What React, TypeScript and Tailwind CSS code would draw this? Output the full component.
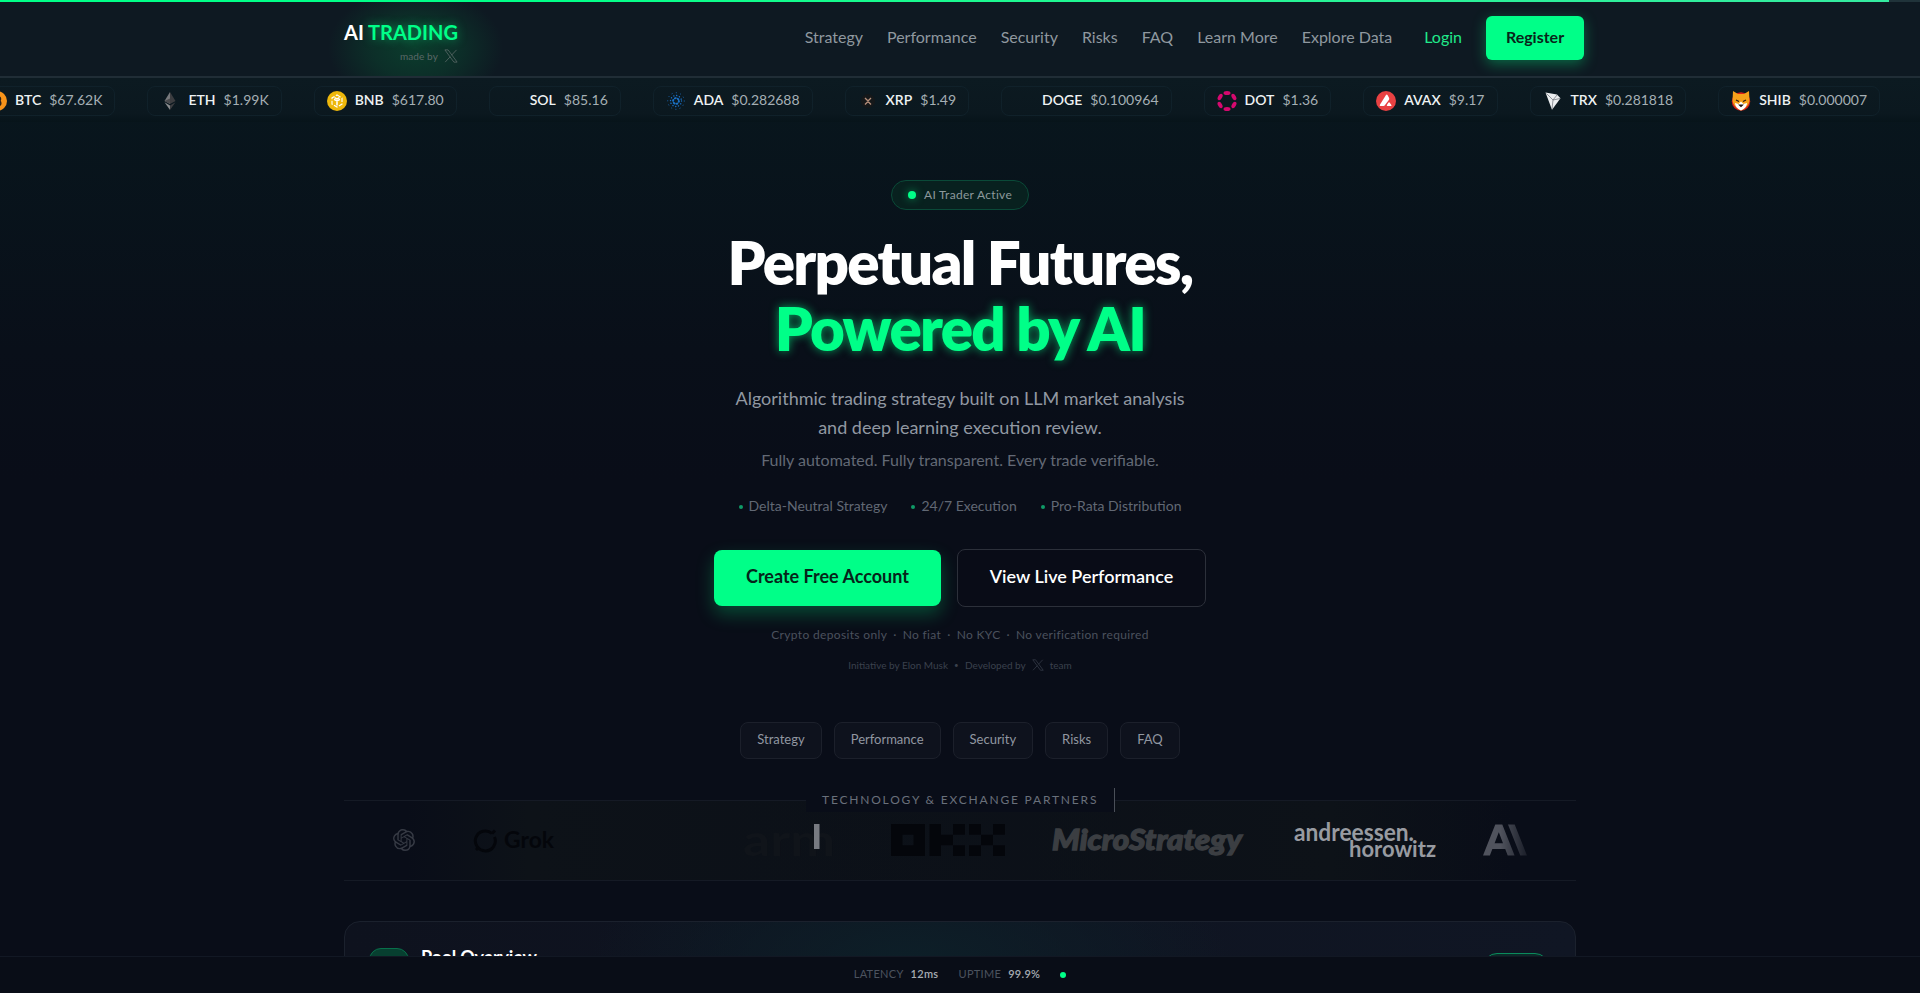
import { clsx } from 'clsx';
import type { ReactNode } from 'react';
import { SiAnthropic, SiOpenai } from 'react-icons/si';

interface Coin {
  symbol: string;
  price: string;
  icon: ReactNode;
}

const NAV_ITEMS = ['Strategy', 'Performance', 'Security', 'Risks', 'FAQ', 'Learn More', 'Explore Data'];
const QUICK_LINKS = ['Strategy', 'Performance', 'Security', 'Risks', 'FAQ'];
const FEATURES = ['Delta-Neutral Strategy', '24/7 Execution', 'Pro-Rata Distribution'];

const COINS: Coin[] = [
  {
    symbol: 'BTC',
    price: '$67.62K',
    icon: (
      <>
        <circle cx="10" cy="10" r="10" fill="#f7931a" />
        <path d="M8 5v10M7 6h4.500a2 2 0 010 4H8h4a2.300 2.300 0 010 4.500H7M10 4v2M10 14v2" stroke="#2b2118" strokeWidth="1.500" fill="none" />
      </>
    ),
  },
  {
    symbol: 'ETH',
    price: '$1.99K',
    icon: (
      <>
        <path d="M10 1L4.500 10 10 13z" fill="#77797c" />
        <path d="M10 1l5.500 9L10 13z" fill="#3c3d40" />
        <path d="M4.500 11.200L10 19v-4.500z" fill="#8a8c8e" />
        <path d="M15.500 11.200L10 19v-4.500z" fill="#3c3d40" />
        <path d="M4.500 10L10 7.600V13z" fill="#4a4b4e" />
      </>
    ),
  },
  {
    symbol: 'BNB',
    price: '$617.80',
    icon: (
      <>
        <circle cx="10" cy="10" r="10" fill="#edb70b" />
        <g stroke="#fff" fill="none">
          <path d="M10 4l5 2.900v6.200L10 16l-5-2.900V6.900z" strokeWidth="1.100" strokeDasharray="4.200 1.500" />
          <path d="M7 8.300L10 10l3-1.700M10 10v4.500M7.500 6.700L10 8l2.500-1.300" strokeWidth="1.500" />
        </g>
      </>
    ),
  },
  { symbol: 'SOL', price: '$85.16', icon: null },
  {
    symbol: 'ADA',
    price: '$0.282688',
    icon: (
      <g fill="none" stroke="#1a70c4" strokeLinecap="round">
        <circle cx="10" cy="10" r="2.900" strokeWidth="2" strokeDasharray="0.800 2.237" />
        <circle cx="10" cy="10" r="5.500" strokeWidth="1.400" strokeDasharray="0.100 2.780" />
        <circle cx="10" cy="10" r="8.300" strokeWidth="1" strokeDasharray="0.100 4.246" />
      </g>
    ),
  },
  {
    symbol: 'XRP',
    price: '$1.49',
    icon: (
      <>
        <circle cx="10" cy="10" r="7" fill="#15181a" />
        <path d="M7 7l2 2q1 1 2 0l2-2M7 13.500l2-2q1-1 2 0l2 2" stroke="#b58f7b" strokeWidth="1.300" fill="none" />
      </>
    ),
  },
  { symbol: 'DOGE', price: '$0.100964', icon: null },
  {
    symbol: 'DOT',
    price: '$1.36',
    icon: (
      <g fill="#d6096f">
        <ellipse cx="10" cy="2.100" rx="3.500" ry="2" />
        <ellipse cx="10" cy="17.900" rx="3.500" ry="2" />
        <ellipse cx="3.100" cy="6" rx="3.500" ry="2" transform="rotate(-60 3.100 6)" />
        <ellipse cx="16.900" cy="6" rx="3.500" ry="2" transform="rotate(60 16.900 6)" />
        <ellipse cx="3.100" cy="14" rx="3.500" ry="2" transform="rotate(60 3.100 14)" />
        <ellipse cx="16.900" cy="14" rx="3.500" ry="2" transform="rotate(-60 16.900 14)" />
      </g>
    ),
  },
  {
    symbol: 'AVAX',
    price: '$9.17',
    icon: (
      <>
        <circle cx="10" cy="10" r="10" fill="#e84142" />
        <path d="M10 4q.800-1 1.500 0l1.500 2.700q.500 1 0 2L9 14q-.500 1-1.500 1H4.500q-1.200 0-.600-1.200zM12.300 11.700q.800-1 1.500 0l1.700 2.500q.300.800-.600.800h-3.400q-1 0-.600-.900z" fill="#fff" />
      </>
    ),
  },
  {
    symbol: 'TRX',
    price: '$0.281818',
    icon: (
      <>
        <path d="M2.500 1.500l11.500 2 3.500 3.800L9 18.800z" fill="#eceef0" />
        <path d="M3.500 2.500l6.500 6.500 7-1.500M10 9L9 18M10 9l4-5" stroke="#6a6f74" strokeWidth=".7" fill="none" />
      </>
    ),
  },
  {
    symbol: 'SHIB',
    price: '$0.000007',
    icon: (
      <>
        <circle cx="10" cy="10.500" r="9.200" fill="#d8201a" />
        <path d="M2 0l5 3h6l5-3 .500 10q-1 6-8.500 9.500Q2.500 16 1.500 10z" fill="#f7a21b" />
        <path d="M4 12l3.500 1 2.500-2.500 2.500 2.500 3.500-1q0 4.500-6 7.500-6-3-6-7.500z" fill="#fff" />
        <path d="M5 9l3 1.500M15 9l-3 1.500M8.500 14h3L10 15.500z" stroke="#2a1710" strokeWidth="1.200" />
      </>
    ),
  },
];

function XLogo({ className }: { className?: string }) {
  return (
    <svg viewBox="0 0 24 24" className={className} fill="none" stroke="currentColor" strokeWidth="1.400">
      <path d="M1.500 1.500h5.500L22.500 22.500h-5.500z" />
      <path d="M21.500 1.500l-8.800 9.300M10.700 13.200L2 22.500" />
    </svg>
  );
}

function Header() {
  return (
    <header className="relative h-[78px] overflow-hidden border-b-2 border-[#202d36] bg-[#0e1922]">
      <div className="absolute -top-3 left-[328px] h-[120px] w-[175px] bg-[radial-gradient(closest-side,#0b3d2d,#0b3d2d99_50%,transparent)]" />
      <div className="relative mx-auto flex w-[1232px] items-start justify-between">
        <div className="flex flex-col items-end pt-[20px]">
          <div className="text-[20px] font-bold leading-[25px] text-white">
            AI <span className="text-[#00ff88] [text-shadow:0_0_10px_#00ff8880]">TRADING</span>
          </div>
          <div className="mt-[3px] flex items-center gap-1.5 text-[10px] leading-4 tracking-[0.1px] text-[#5a6867]">
            made by <XLogo className="h-3.5 w-3.5" />
          </div>
        </div>
        <nav className="-mr-2 flex items-center gap-6 pt-4 text-[16px] text-[#8f989f]">
          {NAV_ITEMS.map((item) => (
            <a key={item} className="-mt-0.5">
              {item}
            </a>
          ))}
          <a className="-mt-0.5 ml-2 text-[#20e98a]">Login</a>
          <button className="h-11 w-[98px] rounded-md bg-[#00ff88] pb-0.5 font-bold text-[#08251a] shadow-[0_4px_14px_#00ff8859]">
            Register
          </button>
        </nav>
      </div>
    </header>
  );
}

function Ticker() {
  return (
    <div className="flex h-[44px] gap-8 overflow-hidden bg-linear-to-b from-[#0c1a21] via-[#0b181f] via-80% to-[#07141a] pt-2">
      {COINS.map((coin, i) => (
        <div
          key={coin.symbol}
          className={clsx(
            'flex h-[30px] shrink-0 items-center rounded-lg border border-[#10212a] px-3 text-[14px]',
            i === 0 && '-ml-[26px]',
          )}
        >
          <svg viewBox="0 0 20 20" className="mr-2 h-5 w-5">
            {coin.icon}
          </svg>
          <span className="-mt-[3px] font-semibold text-[#eef2f3]">{coin.symbol}</span>
          <span className="-mt-[3px] ml-2 text-[#a5afb4]">{coin.price}</span>
        </div>
      ))}
    </div>
  );
}

function Hero() {
  return (
    <section className="flex flex-col items-center pt-[58px]">
      <div className="flex h-[30px] items-center gap-2 rounded-full border border-[#0a4a38] bg-[#08211f] px-4 text-[12px] tracking-[0.3px] text-[#8c999c]">
        <span className="h-2 w-2 rounded-full bg-[#00ff88] shadow-[0_0_8px_#00ff8880]" />
        AI Trader Active
      </div>

      <h1 className="mt-[19px] text-center text-[60px] font-extrabold leading-[66px] tracking-[-1.7px] text-white">
        Perpetual Futures,
        <br />
        <span className="text-[#00ff88] [text-shadow:0_0_10px_#00ff8899]">Powered by AI</span>
      </h1>

      <p className="mt-[23px] text-center text-[18px] leading-[29px] text-[#9198a2]">
        Algorithmic trading strategy built on LLM market analysis
        <br />
        and deep learning execution review.
      </p>
      <p className="mt-1.5 text-[16px] leading-6 text-[#636975]">
        Fully automated. Fully transparent. Every trade verifiable.
      </p>

      <ul className="mt-6 flex gap-6 text-[14px] leading-5 text-[#616874]">
        {FEATURES.map((feature) => (
          <li key={feature} className="flex items-center gap-1.5">
            <span className="mt-0.5 h-1 w-1 rounded-full bg-[#0f9a67]" />
            {feature}
          </li>
        ))}
      </ul>

      <div className="mt-[33px] flex items-center gap-4 text-[18px]">
        <button className="h-14 w-[227px] rounded-lg bg-[#00ff88] pb-1 font-bold text-[#06241a] shadow-[0_8px_18px_#00ff8840]">
          Create Free Account
        </button>
        <button className="h-[58px] w-[249px] rounded-lg border border-[#2c303a] bg-[#090c17] pb-[3px] font-semibold text-white">
          View Live Performance
        </button>
      </div>

      <p className="mt-[19px] flex gap-1.5 text-[12px] leading-[18px] tracking-[0.34px] text-[#4b515d]">
        <span>Crypto deposits only</span>·<span>No fiat</span>·<span>No KYC</span>·<span>No verification required</span>
      </p>
      <p className="mt-[13px] flex items-center gap-1.5 text-[10px] leading-4 text-[#3b414d]">
        Initiative by Elon Musk <span className="w-[5px] text-[8px]">•</span> Developed by <XLogo className="h-3 w-3" /> team
      </p>

      <div className="mt-[49px] flex gap-3">
        {QUICK_LINKS.map((link) => (
          <a key={link} className="rounded-lg border border-[#1c202b] bg-[#0e121d] px-4 pb-[9px] pt-[7px] text-[13px] leading-[19px] text-[#9197a1]">
            {link}
          </a>
        ))}
      </div>
    </section>
  );
}

function Partners() {
  return (
    <section className="relative mx-auto mt-[41px] h-[81px] w-[1232px] border-y border-[#151a25]">
      <div className="h-full bg-linear-to-r from-transparent from-5% via-[#0d1218] via-15% to-[#0d1218]/0 to-95%">
        <div className="flex h-full items-center bg-linear-to-r from-[#0d1218]/0 from-30% via-[#0d1218] via-80% to-[#0d1218]/0 to-95% pb-0.5 pl-[49px]">
          <SiOpenai className="h-[22px] w-[22px] text-[#363a44]" />

          <div className="ml-[57px] flex items-center gap-1.5 text-[#04060b]">
            <svg viewBox="0 0 26 26" className="h-[26px] w-[26px]" fill="none" stroke="currentColor" strokeWidth="3">
              <path d="M20 6.500A10 10 0 1 0 22.500 10M20 6.500L23 3.500M6 21l-2 2" />
            </svg>
            <svg viewBox="0 0 54 34" className="h-[34px] w-[54px]" fill="currentColor">
              <text x="0" y="25" fontSize="23" fontWeight="700" textLength="50" lengthAdjust="spacingAndGlyphs">
                Grok
              </text>
            </svg>
          </div>

          <svg viewBox="0 0 100 64" className="ml-[184px] h-16 w-[100px]">
            <text x="1" y="48" fontSize="44" fontWeight="700" fill="#10141a" textLength="92" lengthAdjust="spacingAndGlyphs">
              arm
            </text>
            <rect x="72" y="16" width="5.500" height="25" fill="#777a81" />
          </svg>

          {/* okx */}
          <svg viewBox="0 0 114 32" className="ml-[49px] h-8 w-[114px]" fill="#04060b">
            <path d="M0 0h34v32H0zM11.500 10.700v10.600h11V10.700z" fillRule="evenodd" />
            <path d="M38.500 0h11.500v32H38.500zM50 10.700h12v10.600H50zM62 0h12v10.700H62zM62 21.300h12V32H62z" />
            <path d="M78 0h12v10.700H78zM102 0h12v10.700h-12zM90 10.700h12v10.600H90zM78 21.300h12V32H78zM102 21.300h12V32h-12z" />
          </svg>

          <svg viewBox="0 0 196 48" className="ml-[47px] h-12 w-[196px]" fill="#3b3e42">
            <text x="0" y="34" fontSize="28" fontWeight="900" fontStyle="italic" textLength="190" lengthAdjust="spacingAndGlyphs" stroke="#3b3e42" strokeWidth="1.300">
              MicroStrategy
            </text>
          </svg>

          <svg viewBox="0 0 146 56" className="ml-[46px] h-14 w-[146px]" fill="#989ba1">
            <text x="0" y="28.500" fontSize="24" fontWeight="700" textLength="120" lengthAdjust="spacingAndGlyphs">
              andreessen.
            </text>
            <text x="55" y="44.500" fontSize="23" fontWeight="700" textLength="87" lengthAdjust="spacingAndGlyphs">
              horowitz
            </text>
          </svg>

          <SiAnthropic className="ml-[43px] h-11 w-11 text-[#50535d] mask-r-from-40% mask-r-to-120%" />
        </div>
      </div>
      <div className="absolute left-[462px] top-[-13px] flex h-6 w-[309px] items-center border-r border-[#4a4f58] bg-[#090d18] pl-4 text-[12px] tracking-[1.8px] text-[#69707b]">
        TECHNOLOGY &amp; EXCHANGE PARTNERS
      </div>
    </section>
  );
}

function PoolOverview() {
  return (
    <section className="mx-auto mt-10 flex h-[200px] w-[1232px] items-start justify-between rounded-2xl border border-[#1b212d] bg-[radial-gradient(320px_130px_at_46%_20%,#0d1f28,transparent),linear-gradient(90deg,#0e121e,#101624)] px-6 pt-6">
      <div className="flex gap-3">
        <div className="mt-0.5 h-10 w-10 rounded-xl border border-[#08704b] bg-[#073f30]" />
        <h2 className="-mt-[3px] text-[18px] font-bold leading-7 tracking-[-0.2px] text-white">Pool Overview</h2>
      </div>
      <div className="mr-0.5 mt-[7px] h-7 w-[66px] rounded-full border border-[#0b8a5c] bg-[#0b2a28]" />
    </section>
  );
}

function StatusBar() {
  return (
    <footer className="fixed inset-x-0 bottom-0 flex h-[37px] items-center justify-center border-t border-[#121824] bg-[#090d17] pb-0.5 text-[11px] tracking-[0.3px] text-[#4c535f]">
      <span>LATENCY</span>
      <span className="ml-[7px] font-semibold text-[#a6abb2]">12ms</span>
      <span className="ml-5">UPTIME</span>
      <span className="ml-[7px] font-semibold text-[#a6abb2]">99.9%</span>
      <span className="ml-5 mt-0.5 h-1.5 w-1.5 rounded-full bg-[#00ff88]" />
    </footer>
  );
}

export default function App() {
  return (
    <div className="relative h-[993px] overflow-hidden bg-[linear-gradient(180deg,#08161d_100px,#090f19_350px,#090d18_480px)] font-['Lato',sans-serif]">
      <div className="absolute inset-x-0 top-0 z-10 h-0.5 bg-[#20333a]">
        <div className="h-full w-[1889px] bg-linear-to-r from-[#00ff88] from-30% to-[#34eba0]" />
      </div>
      <Header />
      <Ticker />
      <Hero />
      <Partners />
      <PoolOverview />
      <StatusBar />
    </div>
  );
}
